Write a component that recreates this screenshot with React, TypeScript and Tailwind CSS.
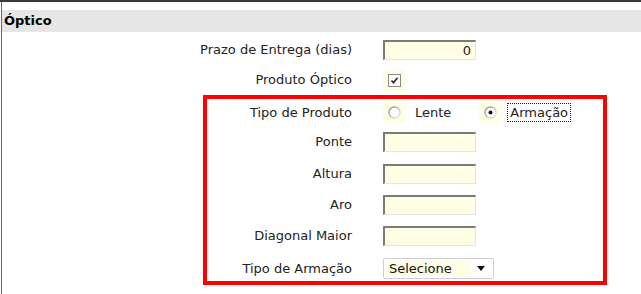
import React from "react";

const font = { fontFamily: '"DejaVu Sans", Verdana, sans-serif' };

function TextInput({ value }: { value?: string }) {
  return (
    <div className="w-[93px] h-[20px] bg-[#fffde3] border-t-2 border-l-2 border-t-[#7a7a7a] border-l-[#7a7a7a] border-r border-b border-r-[#e4e4e4] border-b-[#e4e4e4] flex items-center justify-end pr-[4px] text-[13px] text-[#222]">
      {value}
    </div>
  );
}

function Radio({ checked }: { checked?: boolean }) {
  return (
    <div className="w-[23px] h-[22px] bg-[#fffde3] flex items-center justify-center">
      <svg width="13" height="13" viewBox="0 0 13 13">
        <defs>
          <linearGradient id="rg" x1="0" y1="0" x2="1" y2="1">
            <stop offset="0" stopColor="#8a8a8a" />
            <stop offset="1" stopColor="#f0f0f0" />
          </linearGradient>
        </defs>
        <circle cx="6.5" cy="6.5" r="5.5" fill="#fff" stroke="url(#rg)" strokeWidth="1.4" />
        {checked && <circle cx="6.5" cy="6.5" r="2" fill="#111" />}
      </svg>
    </div>
  );
}

function Row({ label, labelW, h, pt = 0, children }: { label: string; labelW: number; h: number; pt?: number; children: React.ReactNode }) {
  return (
    <div className="flex items-center" style={{ height: h, paddingTop: pt }}>
      <div className="text-right whitespace-nowrap text-[13px] text-[#222] shrink-0" style={{ width: labelW }}>
        {label}
      </div>
      <div className="ml-[31px] flex items-center">{children}</div>
    </div>
  );
}

export default function App() {
  return (
    <div className="w-[641px] h-[294px] bg-white overflow-hidden" style={font}>
      <div className="h-[2px] bg-[#3a3a3a]" />
      <div className="ml-[1px] border-l border-[#666] h-[292px]">
        <div className="h-[8px]" />
        <div className="h-[22px] bg-[#e6e6e6] flex items-center pl-[2px] text-[13px] font-bold text-black">
          Óptico
        </div>
        <div className="h-[3px]" />
        <Row label="Prazo de Entrega (dias)" labelW={350} h={30}>
          <TextInput value="0" />
        </Row>
        <Row label="Produto Óptico" labelW={350} h={30}>
          <div className="w-[22px] h-[22px] bg-[#fffde3] flex items-center justify-center">
            <div className="w-[13px] h-[13px] border border-[#8a8a8a] bg-white flex items-center justify-center">
              <svg width="9" height="9" viewBox="0 0 9 9">
                <path d="M1.5 4.5 L3.5 6.8 L7.5 1.8" stroke="#222" strokeWidth="1.6" fill="none" />
              </svg>
            </div>
          </div>
        </Row>
        <div className="ml-[201px] w-[404px] h-[190px] border-4 border-[#ff0000]">
          <Row label="Tipo de Produto" labelW={145} h={27}>
            <Radio />
            <span className="ml-[9px] text-[13px] text-[#222]">Lente</span>
            <div className="ml-[28px]">
              <Radio checked />
            </div>
            <span className="ml-[5px] px-[2px] h-[19px] flex items-center border border-dotted border-[#222] text-[13px] text-[#222]">
              Armação
            </span>
          </Row>
          <Row label="Ponte" labelW={145} h={32}>
            <TextInput />
          </Row>
          <Row label="Altura" labelW={145} h={31}>
            <TextInput />
          </Row>
          <Row label="Aro" labelW={145} h={31}>
            <TextInput />
          </Row>
          <Row label="Diagonal Maior" labelW={145} h={31}>
            <TextInput />
          </Row>
          <Row label="Tipo de Armação" labelW={145} h={30} pt={5}>
            <div className="w-[111px] h-[21px] border border-[#cfcfcf] rounded-[2px] bg-white flex items-center pl-[3px] pr-[8px]">
              <span className="bg-[#fffde3] w-[84px] h-[15px] flex items-center pl-[2px] text-[13px] text-[#111]">Selecione</span>
              <svg className="ml-auto" width="8" height="5" viewBox="0 0 8 5">
                <path d="M0 0 L8 0 L4 5 Z" fill="#111" />
              </svg>
            </div>
          </Row>
        </div>
      </div>
    </div>
  );
}
